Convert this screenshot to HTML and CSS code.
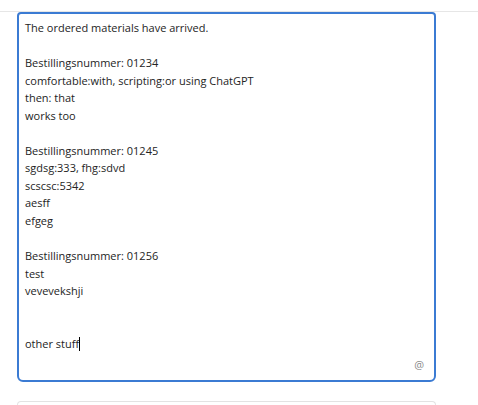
FILE: index.html
```html
<!DOCTYPE html>
<html>
<head>
<meta charset="utf-8">
<link rel="stylesheet" href="styles.css">
</head>
<body>
<div class="topbar"></div>
<div class="editor">
  <div class="text">
    <div class="line">The ordered materials have arrived.</div>
    <div class="line">&nbsp;</div>
    <div class="line">Bestillingsnummer: 01234</div>
    <div class="line">comfortable:with, scripting:or using ChatGPT</div>
    <div class="line">then: that</div>
    <div class="line">works too</div>
    <div class="line">&nbsp;</div>
    <div class="line">Bestillingsnummer: 01245</div>
    <div class="line">sgdsg:333, fhg:sdvd</div>
    <div class="line">scscsc:5342</div>
    <div class="line">aesff</div>
    <div class="line">efgeg</div>
    <div class="line">&nbsp;</div>
    <div class="line">Bestillingsnummer: 01256</div>
    <div class="line">test</div>
    <div class="line">veveveksh<span>ji</span></div>
    <div class="line">&nbsp;</div>
    <div class="line">&nbsp;</div>
    <div class="line">other stuff<span class="caret"></span></div>
  </div>
  <span class="at">@</span>
</div>
<div class="next"></div>
</body>
</html>
```
FILE: styles.css
```css
html, body {
  margin: 0;
  padding: 0;
  background: #ffffff;
}
body {
  font-family: "Open Sans", "Noto Sans", sans-serif;
  font-size: 11px;
  color: #242424;
  width: 478px;
  height: 405px;
  overflow: hidden;
}
.topbar {
  height: 11px;
  border-bottom: 1px solid #e6e6e6;
}
.editor {
  position: relative;
  margin-left: 17px;
  width: 419px;
  height: 370px;
  box-sizing: border-box;
  border: 2px solid #3b7bd3;
  border-radius: 4px 4px 6px 6px;
  padding: 5px 6px 0;
}
.text .line {
  line-height: 17.55px;
  height: 17.55px;
  white-space: pre;
}
.caret {
  display: inline-block;
  width: 1px;
  height: 14px;
  background: #000;
  vertical-align: -3px;
}
.at {
  position: absolute;
  right: 10px;
  bottom: 9px;
  font-size: 11px;
  color: #8a8a8a;
  line-height: 12px;
}
.next {
  margin-top: 19px;
  margin-left: 17px;
  width: 419px;
  height: 4px;
  box-sizing: border-box;
  border: 1px solid #e3e3e3;
  border-bottom: none;
  border-radius: 6px 6px 0 0;
}
```
